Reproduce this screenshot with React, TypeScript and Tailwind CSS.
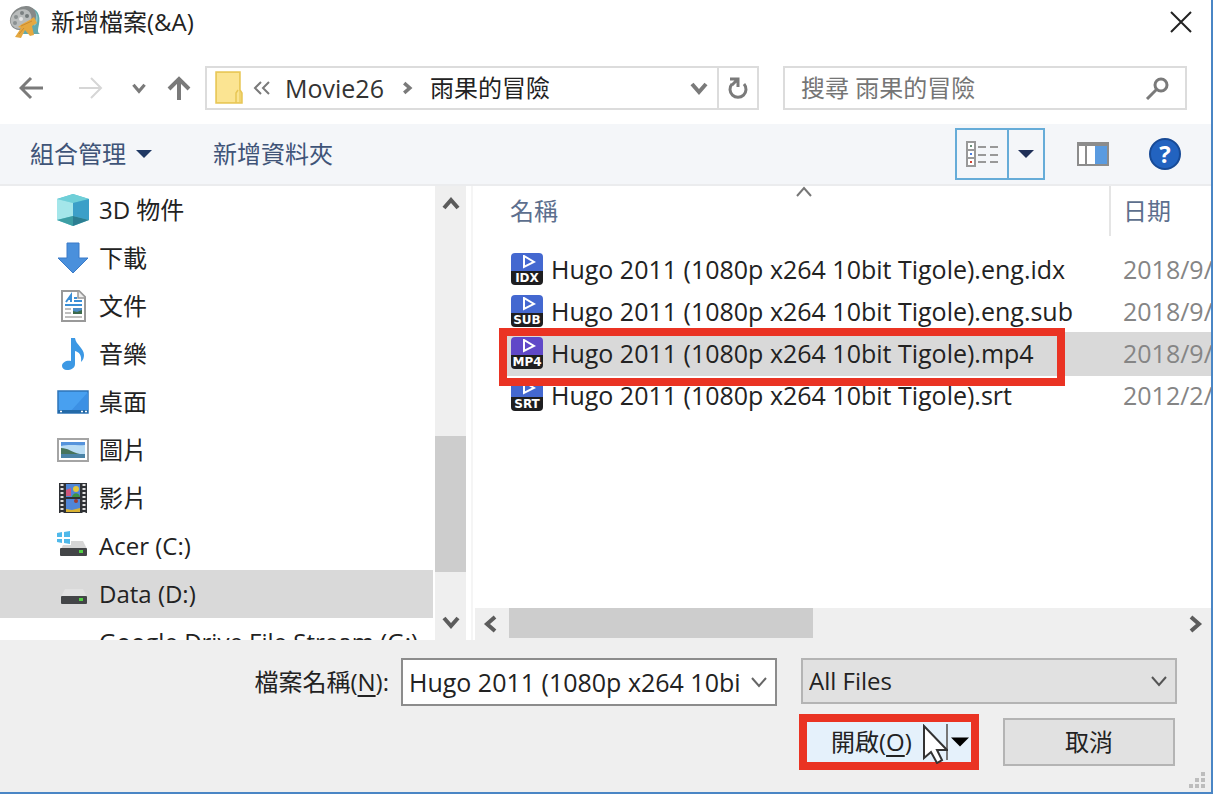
import { useState } from "react";
import type { ReactNode } from "react";

type FileRow = {
  name: string;
  ext: string;
  date: string;
};

const files: FileRow[] = [
  { name: "Hugo 2011 (1080p x264 10bit Tigole).eng.idx", ext: "IDX", date: "2018/9/" },
  { name: "Hugo 2011 (1080p x264 10bit Tigole).eng.sub", ext: "SUB", date: "2018/9/" },
  { name: "Hugo 2011 (1080p x264 10bit Tigole).mp4", ext: "MP4", date: "2018/9/" },
  { name: "Hugo 2011 (1080p x264 10bit Tigole).srt", ext: "SRT", date: "2012/2/" },
];

/* ---------- small glyphs ---------- */

function Chevron({ dir, className, width = 4 }: { dir: "up" | "down" | "left" | "right"; className: string; width?: number }) {
  const paths = {
    up: "M3 14 L10 6 L17 14",
    down: "M3 6 L10 14 L17 6",
    left: "M14 3 L6 10 L14 17",
    right: "M6 3 L14 10 L6 17",
  };
  return (
    <svg viewBox="0 0 20 20" className={className} fill="none" stroke="currentColor" strokeWidth={width}>
      <path d={paths[dir]} />
    </svg>
  );
}

function Triangle({ className }: { className: string }) {
  return (
    <svg viewBox="0 0 16 8" className={className} fill="currentColor">
      <path d="M0 0 H16 L8 8 Z" />
    </svg>
  );
}

function AppIcon() {
  return (
    <svg viewBox="0 0 32 34" className="h-[34px] w-8 shrink-0">
      <path d="M18 3 C28 2 32 10 30 19 C29 25 28 27 31 29 L14 29 Z" fill="#62a9ad" />
      <path d="M22 5 C29 8 29 16 25 20" fill="none" stroke="#8fc7c5" strokeWidth="2" />
      <ellipse cx="14" cy="13" rx="14" ry="11" fill="#858989" transform="rotate(-35 14 13)" />
      <ellipse cx="12" cy="14" rx="11" ry="9" fill="#b9bcbc" transform="rotate(-35 12 14)" />
      <circle cx="7" cy="12" r="2" fill="#8a8f90" />
      <circle cx="13" cy="8" r="2" fill="#7c8182" />
      <circle cx="18" cy="11" r="2" fill="#73797a" />
      <circle cx="6" cy="18" r="2" fill="#8a8f90" />
      <circle cx="12" cy="14" r="2" fill="#e6e6e6" />
      <path d="M9 22 C14 18 20 16 25 12 L28 18 L23 21 L25 30 L21 31 L16 25 L12 33 L6 32 L12 23 Z" fill="#e5a840" />
      <path d="M12 21 L23 16 M10 29 L15 23" stroke="#c98a32" strokeWidth="1" />
    </svg>
  );
}

function FolderIcon() {
  return (
    <svg viewBox="0 0 28 34" className="h-[34px] w-7">
      <path d="M1 1 H25 V19 L27 22 V32 H1 Z" fill="#f0d470" />
      <path d="M2 2 H24 V31 H2 Z" fill="#fbe492" />
      <path d="M1 1 H25 V19 L27 22 V32 H1 Z M21 32 V22 L23 19" fill="none" stroke="#e8c655" strokeWidth="1.5" />
    </svg>
  );
}

/* ---------- navigation pane icons ---------- */

const icons: Record<string, ReactNode> = {
  cube: (
    <>
      <path d="M16 0 L32 5 V26 L16 32 L0 26 V5 Z" fill="#5cc4d2" />
      <path d="M16 0 L32 5 L16 9 L0 5 Z" fill="#6fcfd8" />
      <path d="M0 5 L16 9 V22 L0 26 Z" fill="#a4e6ea" />
      <path d="M16 9 L32 5 V26 L16 22 Z" fill="#3c9fc8" />
      <path d="M16 22 L32 26 L16 32 Z" fill="#2c7e92" />
      <path d="M16 22 L0 26 L16 32 Z" fill="#3d9ea4" />
    </>
  ),
  download: <path d="M10 1 H22 V16 H31 L16 31 L1 16 H10 Z" fill="#4a90dc" stroke="#3a7bc8" />,
  document: (
    <>
      <path d="M5 1 H22 L28 7 V31 H5 Z" fill="#fff" stroke="#999" strokeWidth="2" />
      <path d="M21 1 V8 H28" fill="#eee" stroke="#999" strokeWidth="1.5" />
      <path d="M9 12 L14 5 V12 M11 9 H15" stroke="#3b8fd6" strokeWidth="2" fill="none" />
      <path d="M17 8 H20 M17 11 H25 M8 15 H25" stroke="#3b8fd6" strokeWidth="2" />
      <path d="M8 19 H14 M8 23 H14 M8 27 H25" stroke="#aaa" strokeWidth="1.5" />
      <rect x="16" y="18" width="9" height="6" fill="#4d8cc4" />
      <path d="M16 24 V21 L20 22 L25 20 V24 Z" fill="#3d6b4c" />
    </>
  ),
  music: (
    <path
      d="M14 0 H18 C19 7 27 10 27 17 C27 20 26 22 24 24 C25 17 22 14 18 13 V26 C18 30 14 32 10 32 C7 32 5 30 5 28 C5 24 10 22 14 23 Z"
      fill="#3c98e4"
    />
  ),
  desktop: (
    <>
      <rect x="1" y="5" width="30" height="22" fill="#48a0f0" stroke="#2e74b8" strokeWidth="1.5" />
      <path d="M31 6 V27 H12 Z" fill="#3c90e4" />
      <rect x="1" y="24" width="30" height="3" fill="#246aa8" />
      <path d="M3 25.5 H5 M24 25.5 H26 M28 25.5 H30" stroke="#fff" strokeWidth="1.5" />
    </>
  ),
  picture: (
    <>
      <rect x="1" y="5" width="30" height="22" fill="#fff" stroke="#a4a4a4" strokeWidth="2" />
      <rect x="4" y="8" width="24" height="16" fill="#b9dcf4" />
      <path d="M4 8 H28 V11 C20 12 13 10 4 12 Z" fill="#5593dc" />
      <path d="M4 14 C11 14 14 18 23 20 H4 Z" fill="#47745c" />
      <path d="M4 20 H28 V24 H4 Z" fill="#4b83a6" />
    </>
  ),
  video: (
    <>
      <rect x="2" y="1" width="28" height="30" fill="#2f3135" />
      <path d="M5 2 V31 M27 2 V31" stroke="#e0e0e0" strokeWidth="3" strokeDasharray="2 2" />
      <rect x="9" y="2" width="14" height="13" fill="#4f86d8" />
      <rect x="9" y="17" width="14" height="13" fill="#4f86d8" />
      <path d="M9 8 L14 6 L14 14 H9 Z" fill="#d0567c" />
      <circle cx="19" cy="7" r="3" fill="#e3c63c" />
      <path d="M15 15 C16 10 22 10 23 15 Z" fill="#3e9344" />
      <circle cx="19" cy="19" r="2" fill="#9c3c30" />
      <path d="M9 27 L15 28 L23 26 V30 H9 Z" fill="#d9b233" />
    </>
  ),
  system: (
    <>
      <path d="M0 3 L5 2 V7 H0 Z M7 2 L13 1 V7 H7 Z M0 9 H5 V13 L0 12 Z M7 9 H13 V14 L7 13 Z" fill="#50b9ea" />
      <path d="M14 11 H26 L30 19 H4 L6 15 H14 Z" fill="#d6d6d6" />
      <rect x="3" y="18" width="27" height="8" rx="1" fill="#434547" />
      <rect x="22" y="20" width="4" height="3" fill="#52d045" />
    </>
  ),
  drive: (
    <>
      <path d="M8 11 H26 L30 19 H4 Z" fill="#e2e2e2" />
      <rect x="4" y="18" width="26" height="8" rx="1" fill="#434547" />
      <rect x="22" y="20" width="4" height="3" fill="#52d045" />
    </>
  ),
};

const places = [
  { label: "3D 物件", icon: "cube" },
  { label: "下載", icon: "download" },
  { label: "文件", icon: "document" },
  { label: "音樂", icon: "music" },
  { label: "桌面", icon: "desktop" },
  { label: "圖片", icon: "picture" },
  { label: "影片", icon: "video" },
  { label: "Acer (C:)", icon: "system" },
  { label: "Data (D:)", icon: "drive" },
  { label: "Google Drive File Stream (G:)", icon: "" },
];

function FileIcon({ ext }: { ext: string }) {
  return (
    <span className="flex h-8 w-8 shrink-0 flex-col">
      <span className={`flex h-[18px] items-center justify-center rounded-t-sm ${ext === "MP4" ? "bg-[#6048c8]" : "bg-[#4468d0]"}`}>
        <svg viewBox="0 0 14 14" className="ml-1 h-[14px] w-[14px]" fill="none" stroke="#fff" strokeWidth="2">
          <path d="M2 1 V12 L12 7 Z" />
        </svg>
      </span>
      <span className="flex h-[14px] items-center justify-center rounded-b-sm bg-[#1e1e20] font-['DejaVu_Sans',sans-serif] text-[12px] leading-[14px] font-bold text-white">
        {ext}
      </span>
    </span>
  );
}

export default function App() {
  const [place, setPlace] = useState("Data (D:)");
  const [selected, setSelected] = useState("MP4");

  return (
    <div className="h-screen bg-white pr-[11px] pb-1 font-['Open_Sans','Noto_Sans_CJK_TC',sans-serif] text-[24px] leading-8 text-[#222]">
      <div className="flex h-full flex-col overflow-hidden border-r-2 border-b-2 border-[#4a86c5] bg-white">

        {/* TITLE BAR */}
        <header className="flex h-12 shrink-0 items-center pr-[18px] pb-1 pl-[9px]">
          <AppIcon />
          <h1 className="ml-[10px] flex-1">新增檔案(&amp;A)</h1>
          <button type="button" aria-label="關閉">
            <svg viewBox="0 0 24 24" className="h-6 w-6" stroke="#222" strokeWidth="2">
              <path d="M2 2 L22 22 M22 2 L2 22" />
            </svg>
          </button>
        </header>

        {/* ADDRESS ROW */}
        <nav className="flex h-[76px] shrink-0 items-center pt-1 pr-6 pl-[19px] text-[#7a7a7a]">
          <button type="button" aria-label="上一頁">
            <svg viewBox="0 0 24 24" className="h-6 w-6" fill="none" stroke="currentColor" strokeWidth="3">
              <path d="M24 12 H2 M12 2 L2 12 L12 22" />
            </svg>
          </button>
          <button type="button" aria-label="下一頁" className="ml-9 text-[#d6d6d6]">
            <svg viewBox="0 0 24 24" className="h-6 w-6" fill="none" stroke="currentColor" strokeWidth="2">
              <path d="M0 12 H22 M12 2 L22 12 L12 22" />
            </svg>
          </button>
          <button type="button" aria-label="最近的位置" className="ml-7">
            <Chevron dir="down" className="h-4 w-4" />
          </button>
          <button type="button" aria-label="上一層" className="ml-5">
            <svg viewBox="0 0 24 24" className="h-6 w-6" fill="none" stroke="currentColor" strokeWidth="4">
              <path d="M12 24 V2 M2 13 L12 3 L22 13" />
            </svg>
          </button>

          <div className="ml-[14px] grid flex-1 grid-cols-[554fr_404fr] gap-6">
            <div className="flex h-11 items-center border-2 border-[#dcdcdc] pl-2">
              <FolderIcon />
              <svg viewBox="0 0 18 14" className="ml-[10px] h-[14px] w-[18px]" fill="none" stroke="currentColor" strokeWidth="2">
                <path d="M8 1 L2 7 L8 13 M16 1 L10 7 L16 13" />
              </svg>
              <button type="button" className="ml-[14px] text-[25px] text-[#333]">Movie26</button>
              <Chevron dir="right" width={5} className="ml-4 h-[14px] w-[14px]" />
              <button type="button" className="ml-4 text-[#222]">雨果的冒險</button>
              <button type="button" aria-label="先前的位置" className="mr-2 ml-auto">
                <Chevron dir="down" className="h-5 w-5" />
              </button>
              <button type="button" aria-label="重新整理" className="flex h-full w-10 items-center justify-center border-l-2 border-[#dcdcdc]">
                <svg viewBox="0 0 24 24" className="h-6 w-6" fill="none" stroke="currentColor" strokeWidth="3">
                  <path d="M6 8 A8 8 0 1 0 18 8" />
                  <path d="M4 3 H12 V11 M12 3 L6 9" />
                </svg>
              </button>
            </div>
            <div className="flex h-11 items-center border-2 border-[#dcdcdc] px-4">
              <input
                type="search"
                aria-label="搜尋"
                placeholder="搜尋 雨果的冒險"
                className="w-full min-w-0 outline-none placeholder:text-[#757575]"
              />
              <svg viewBox="0 0 24 24" className="h-6 w-6 shrink-0" fill="none" stroke="currentColor" strokeWidth="3">
                <circle cx="16" cy="9" r="6" />
                <path d="M12 13 L2 23" />
              </svg>
            </div>
          </div>
        </nav>

        {/* TOOLBAR */}
        <div className="flex h-[62px] shrink-0 items-center border-b-2 border-[#ebecee] bg-[#f4f6f9] px-[30px] text-[#3f5478]">
          <button type="button" className="flex items-center gap-[10px]">
            組合管理
            <Triangle className="h-2 w-4 text-[#1f3864]" />
          </button>
          <button type="button" className="ml-[61px]">新增資料夾</button>
          <div className="ml-auto flex h-[52px] border-2 border-[#66acd8]">
            <button type="button" aria-label="檢視" className="flex w-[50px] items-center justify-center">
              <svg viewBox="0 0 34 28" className="h-7 w-[34px]" fill="none">
                <path d="M2 2 H10 V26 H2 Z M2 10 H10 M2 18 H10" stroke="#999" strokeWidth="2" fill="#fff" />
                <rect x="5" y="5" width="2" height="2" fill="#6a8f7a" />
                <rect x="5" y="13" width="2" height="2" fill="#4a7fe0" />
                <rect x="5" y="21" width="2" height="2" fill="#d04030" />
                <path d="M13 7 H21 M25 7 H33 M13 15 H21 M25 15 H33 M13 22 H21 M25 22 H33" stroke="#999" strokeWidth="2" />
              </svg>
            </button>
            <button type="button" aria-label="更多檢視" className="flex w-9 items-center justify-center border-l-2 border-[#66acd8]">
              <Triangle className="h-2 w-4 text-[#1f2f58]" />
            </button>
          </div>
          <button type="button" aria-label="預覽窗格" className="ml-8">
            <svg viewBox="0 0 32 24" className="h-6 w-8">
              <rect x="1" y="1" width="30" height="22" fill="#fff" stroke="#8c8c8c" strokeWidth="2" />
              <path d="M0 2 H32" stroke="#8c8c8c" strokeWidth="4" />
              <path d="M9 3 V23" stroke="#8c8c8c" strokeWidth="2" />
              <rect x="18" y="4" width="12" height="18" fill="#5a9be0" />
            </svg>
          </button>
          <button
            type="button"
            aria-label="說明"
            className="ml-10 flex h-8 w-8 items-center justify-center rounded-full border-2 border-[#174a96] bg-[#2263c0] font-bold text-white"
          >
            ?
          </button>
        </div>

        {/* PANES */}
        <div className="flex min-h-0 flex-1">
          <ul className="w-[433px] shrink-0 overflow-hidden">
            {places.map((p) => (
              <li key={p.label}>
                <button
                  type="button"
                  onClick={() => setPlace(p.label)}
                  className={`flex h-12 w-full items-center gap-[10px] pl-[57px] whitespace-nowrap ${place === p.label ? "bg-[#d9d9d9]" : ""}`}
                >
                  <svg viewBox="0 0 32 32" className="h-8 w-8 shrink-0">
                    {icons[p.icon]}
                  </svg>
                  {p.label}
                </button>
              </li>
            ))}
          </ul>

          <div className="ml-0.5 flex w-[31px] shrink-0 flex-col items-center bg-[#efefef] py-2 text-[#5c5c5c]">
            <Chevron dir="up" className="h-5 w-5" />
            <div className="flex w-full flex-1 flex-col">
              <div className="flex-[222]" />
              <div className="flex-[136] bg-[#cdcdcd]" />
              <div className="flex-[40]" />
            </div>
            <Chevron dir="down" className="h-5 w-5" />
          </div>

          <div className="ml-[5px] flex min-w-0 flex-1 flex-col border-l-2 border-[#f5f5f5]">
            <div className="min-h-0 flex-1 overflow-hidden pl-[28px]">
              <table className="w-full table-fixed border-collapse text-left">
                <thead>
                  <tr className="h-[62px] align-top text-[#5d6f8e]">
                    <th className="relative w-[610px] p-0 font-normal">
                      <div className="flex h-[50px] items-center border-r-2 border-[#e5e5e5] pl-[9px]">名稱</div>
                      <Chevron dir="up" width={2} className="absolute -top-1 left-1/2 -ml-3 h-5 w-5 text-[#777]" />
                    </th>
                    <th className="p-0 font-normal">
                      <div className="flex h-[50px] items-center pl-3">日期</div>
                    </th>
                  </tr>
                </thead>
                <tbody className="text-[25px]">
                  {files.map((f) => (
                    <tr
                      key={f.ext}
                      onClick={() => setSelected(f.ext)}
                      className={`h-[42px] ${selected === f.ext ? "bg-[#d9d9d9] shadow-[0_2px_0_#d9d9d9]" : ""}`}
                    >
                      <td className="relative p-0">
                        <div className="flex items-center gap-2 pl-[10px] whitespace-nowrap">
                          <FileIcon ext={f.ext} />
                          {f.name}
                        </div>
                        {f.ext === "MP4" && (
                          <div className="pointer-events-none absolute -top-1 right-[46px] -left-0.5 z-10 h-[58px] border-8 border-[#ea3323]" />
                        )}
                      </td>
                      <td className="overflow-hidden p-0 pl-3 whitespace-nowrap text-[#858585]">{f.date}</td>
                    </tr>
                  ))}
                </tbody>
              </table>
            </div>

            <div className="ml-0.5 flex h-8 shrink-0 items-center bg-[#efefef] px-[6px] text-[#5c5c5c]">
              <Chevron dir="left" className="h-5 w-5" />
              <div className="ml-2 flex h-full flex-1 pb-0.5">
                <div className="flex-[304] bg-[#cdcdcd]" />
                <div className="flex-[371]" />
              </div>
              <Chevron dir="right" className="h-5 w-5" />
            </div>
          </div>
        </div>

        {/* FOOTER */}
        <footer className="relative h-[152px] shrink-0 bg-[#efefef] pt-[18px] pr-[34px]">
          <div className="flex items-start">
            <label htmlFor="file-name" className="w-[401px] shrink-0 pt-2 pr-3 text-right">
              檔案名稱(<span className="underline decoration-2 underline-offset-4">N</span>):
            </label>
            <div className="grid min-w-0 flex-1 grid-cols-2 items-start gap-6">
              <div className="flex h-12 items-center border-2 border-[#8c8c8c] bg-white px-[6px]">
                <input
                  id="file-name"
                  type="text"
                  defaultValue="Hugo 2011 (1080p x264 10bi"
                  className="min-w-0 flex-1 text-[25px] outline-none"
                />
                <button type="button" aria-label="檔案名稱清單">
                  <Chevron dir="down" width={2} className="h-5 w-5 text-[#666]" />
                </button>
              </div>
              <div className="relative">
                <select aria-label="檔案類型" className="h-[46px] w-full appearance-none border-2 border-[#b4b4b4] bg-[#e1e1e1] pl-[6px]">
                  <option>All Files</option>
                </select>
                <Chevron dir="down" width={2} className="pointer-events-none absolute top-[13px] right-2 h-5 w-5 text-[#555]" />
              </div>
            </div>
          </div>

          <div className="mt-2 flex items-center justify-end gap-6 pr-0.5">
            <div className="relative flex h-14 w-[180px] border-8 border-[#ea3323] bg-[#e5f1fb]">
              <button type="button" className="flex-1 pl-6 text-left">
                開啟(<span className="underline decoration-2 underline-offset-4">O</span>)
              </button>
              <button type="button" aria-label="開啟選項" className="my-[2px] flex w-[25px] items-center justify-center border-l-2 border-[#777]">
                <Triangle className="h-[10px] w-[18px] text-black" />
              </button>
              <svg viewBox="0 0 26 40" className="pointer-events-none absolute top-0.5 left-[115px] h-10 w-[26px]">
                <path d="M2 2 V34 L9 28 L15 39 L20 36 L15 26 H25 Z" fill="#fff" stroke="#333" strokeWidth="2" />
              </svg>
            </div>
            <button type="button" className="h-12 w-[172px] border-2 border-[#b4b4b4] bg-[#e1e1e1]">取消</button>
          </div>

          {/* resize grip */}
          <svg viewBox="0 0 16 16" className="absolute right-[6px] bottom-1 h-4 w-4" fill="#bdbdbd">
            <path d="M12 0 H16 V4 H12 Z M6 6 H10 V10 H6 Z M12 6 H16 V10 H12 Z M0 12 H4 V16 H0 Z M6 12 H10 V16 H6 Z M12 12 H16 V16 H12 Z" />
          </svg>
        </footer>
      </div>
    </div>
  );
}
